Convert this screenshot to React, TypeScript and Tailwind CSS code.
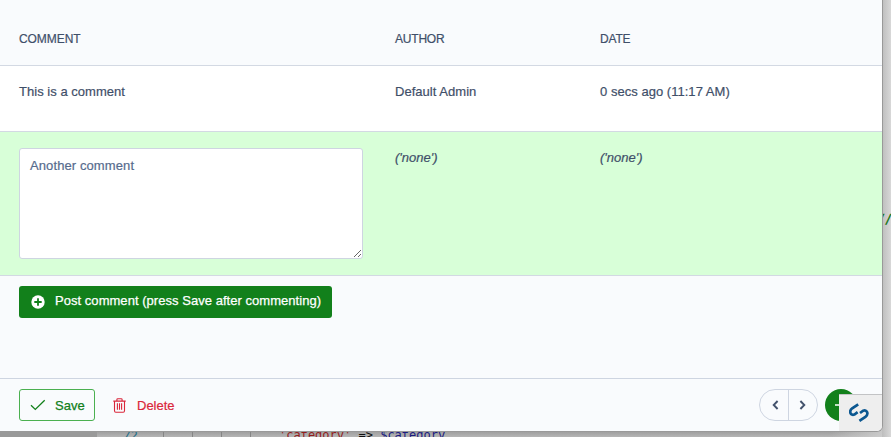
import React from "react";

const rows = [
  { comment: "This is a comment", author: "Default Admin", date: "0 secs ago (11:17 AM)" },
];

const grid = "grid grid-cols-[376px_205px_1fr] pl-[19px] border-b border-[#d3d9e3]";

function EditorBackdrop() {
  return (
    <div className="absolute inset-0 bg-[#d2d2d2] font-['DejaVu_Sans_Mono',monospace] text-[12px] leading-[14px]">
      <div className="absolute bottom-0 left-0 h-[6px] w-full bg-linear-to-b from-[#9c9c9c] to-[#b5b5b5]" />
      <div className="absolute bottom-0 left-0 h-[6px] w-[97px] bg-[#999]" />
      <div className="absolute bottom-0 right-0 h-[6px] w-[60px] bg-linear-to-r from-transparent to-[#cfcfcf]" />
      <div className="absolute right-0 top-0 h-full w-[9px] bg-linear-to-r from-[#bdbdbd] to-[#d8d8d8]" />
      <div className="absolute bottom-0 left-[163px] h-[6px] w-px bg-[#858585]" />
      <div className="absolute bottom-0 left-[192px] h-[6px] w-px bg-[#858585]" />
      <div className="absolute bottom-0 left-[221px] h-[6px] w-px bg-[#858585]" />
      <div className="absolute bottom-0 left-[250px] h-[6px] w-px bg-[#858585]" />
      <div className="absolute left-[123px] top-[429px] italic text-[#256f88]">72</div>
      <div className="absolute left-[279px] top-[428px] whitespace-pre text-[#1b1b80]">
        <span className="text-[#921d1d]">'category'</span>
        <span className="text-[#111]"> =&gt; </span>$category
      </div>
      <div className="absolute left-[878px] top-[212px] whitespace-pre italic text-[#087008] [-webkit-text-stroke:0.3px_#087008]">//</div>
    </div>
  );
}

function PlusCircle() {
  return (
    <svg className="size-[14px]" viewBox="0 0 14 14">
      <circle cx="7" cy="7" r="6.7" fill="#fff" />
      <path d="M7 3.3v7.4M3.3 7h7.4" stroke="#12801b" strokeWidth="1.8" />
    </svg>
  );
}

function Check() {
  return (
    <svg className="h-[12px] w-[16px]" viewBox="0 0 16 12" fill="none" stroke="#12801b" strokeWidth="1.3">
      <path d="M1 6.3 5.3 10.4 14.7 1.2" />
    </svg>
  );
}

function Trash() {
  return (
    <svg className="h-[15px] w-[13px]" viewBox="0 0 13 15" fill="none" stroke="#da273b" strokeWidth="1.1">
      <path d="M.3 3.1h12.4M3.9 3V1.6q0-.9.9-.9h3.4q.9 0 .9.9V3M1.5 3.2v9.6q0 1.4 1.3 1.4h7.4q1.3 0 1.3-1.4V3.2M4.4 5.3v6.5M6.5 5.3v6.5M8.6 5.3v6.5" />
    </svg>
  );
}

function Chevron({ flip = false }: { flip?: boolean }) {
  return (
    <svg className={flip ? "h-[10px] w-[7px] rotate-180" : "h-[10px] w-[7px]"} viewBox="0 0 7 10" fill="none" stroke="#43536d" strokeWidth="1.9">
      <path d="M5.6 1 1.7 5l3.9 4" />
    </svg>
  );
}

function SilverstripeMark() {
  return (
    <svg className="h-[20px] w-[20px]" viewBox="0 0 20 20" fill="none" stroke="#0b5790" strokeWidth="2.7">
      <path d="M9.2 1.3 3.2 5.3C-.4 8.1 1.4 13 5.4 11.5L8.6 9.2" />
      <path d="M10.4 17.9 16.4 13.9C20 11.1 18.2 6.2 14.2 7.7L11 10" />
    </svg>
  );
}

export default function App() {
  return (
    <div className="relative h-[437px] w-[891px] overflow-hidden font-['Liberation_Sans',Arial,sans-serif] text-[13px] leading-5 text-[#3f4f69]">
      <EditorBackdrop />
      <div className="absolute left-0 top-0 flex h-[432px] w-[883px] flex-col overflow-hidden rounded-br-[6px] border-b border-r border-[#999] bg-[#f9fbfd]">
        <div className={`${grid} h-[66px] shrink-0 pt-[29px] text-[12px] [-webkit-text-stroke:0.2px_#3f4f69]`}>
          <span className="tracking-[-0.07px]">COMMENT</span>
          <span className="tracking-[-0.2px]">AUTHOR</span>
          <span className="tracking-[-0.2px]">DATE</span>
        </div>
        {rows.map((row) => (
          <div key={row.comment} className={`${grid} h-[66px] shrink-0 bg-white pt-[16px] tracking-[0.03px] [-webkit-text-stroke:0.2px_#3f4f69]`}>
            <span>{row.comment}</span>
            <span>{row.author}</span>
            <span>{row.date}</span>
          </div>
        ))}
        <div className={`${grid} h-[144px] shrink-0 bg-[#d8ffd8] pt-[16px] [-webkit-text-stroke:0.2px]`}>
          <textarea
            className="h-[111px] w-[344px] resize rounded-[3px] border border-[#ced5e1] bg-white px-[10px] py-[7px] tracking-[0.1px] text-[#566b8d] outline-none"
            defaultValue="Another comment"
          />
          <i>('none')</i>
          <i>('none')</i>
        </div>
        <div className="flex-1 pl-[19px] pt-[10px]">
          <button className="flex h-8 w-[313px] items-center rounded-[3px] bg-[#12801b] pl-[12px] text-white">
            <PlusCircle />
            <span className="ml-[10px] -mt-0.5 whitespace-nowrap tracking-[0.04px] [-webkit-text-stroke:0.25px_white]">Post comment (press Save after commenting)</span>
          </button>
        </div>
        <div className="flex h-[53px] shrink-0 items-center border-t border-[#ced5e1] pl-[19px]">
          <button className="flex h-8 w-[76px] items-center rounded-[3px] border border-[#4bb050] pl-[10px] text-[#12801b]">
            <Check />
            <span className="ml-[9px] mt-0.5 [-webkit-text-stroke:0.25px_#12801b]">Save</span>
          </button>
          <button className="ml-[18px] flex items-center text-[#da273b]">
            <Trash />
            <span className="ml-[11px] mt-0.5 [-webkit-text-stroke:0.2px_#da273b]">Delete</span>
          </button>
          <div className="ml-auto mr-[7px] flex h-8 w-[59px] rounded-full border border-[#ced5e1]">
            <button className="flex w-[29px] items-center justify-center border-r border-[#ced5e1] pl-[2px]">
              <Chevron />
            </button>
            <button className="flex flex-1 items-center justify-center pr-[2px]">
              <Chevron flip />
            </button>
          </div>
          <button className="mr-[25px] flex size-8 items-center justify-center rounded-full bg-[#12801b]">
            <svg className="size-3" viewBox="0 0 12 12" stroke="#fff" strokeWidth="1.4">
              <path d="M0 6h12M6 0v12" />
            </svg>
          </button>
        </div>
        <div className="absolute bottom-0 right-0 flex h-[37px] w-[43px] items-center justify-center border-t border-[#c2c3c5] bg-[#eee] pr-[3px]">
          <SilverstripeMark />
        </div>
      </div>
    </div>
  );
}
